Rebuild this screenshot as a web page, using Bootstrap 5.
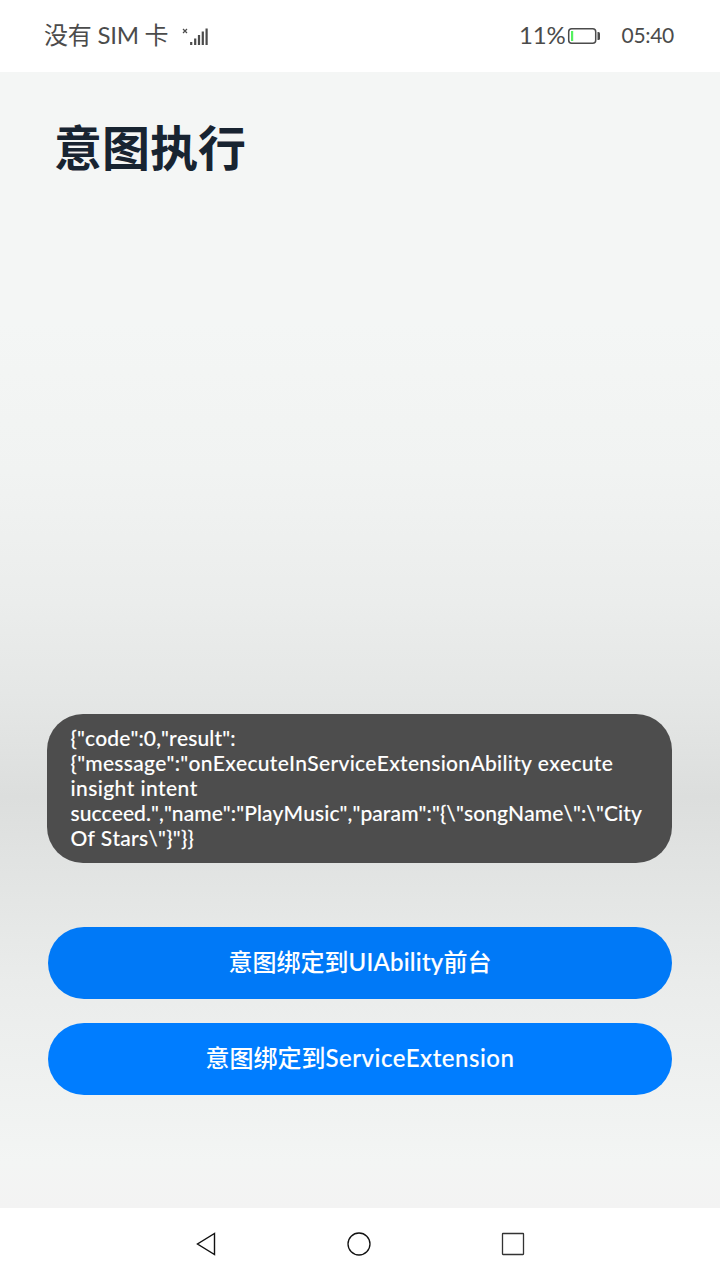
<!DOCTYPE html>
<html lang="zh-CN">
<head>
<meta charset="utf-8">
<meta name="viewport" content="width=device-width, initial-scale=1">
<title>意图执行</title>
<link href="https://cdn.jsdelivr.net/npm/bootstrap@5.3.0/dist/css/bootstrap.min.css" rel="stylesheet">
<style>
body{font-family:Lato,"Noto Sans CJK SC",sans-serif;background:#fff;overflow:hidden}
.status-bar{height:72px;color:#4b4b4b;padding:0 46px 2px 44px;font-size:24px;line-height:36px}
.status-bar svg{position:relative;top:1px}
.sim-text{letter-spacing:-.25px}
.signal-icon{margin-left:14px}
.pct-text{letter-spacing:-.2px;margin-right:1px}
.clock-text{font-size:21px;margin-left:21px;letter-spacing:-.3px}
.page-main{padding:0 48px 113px;background:linear-gradient(#f4f6f5 0,#f4f6f5 250px,#f1f3f2 400px,#ebedec 530px,#e5e7e6 620px,#e0e2e1 680px,#dcdedd 725px,#e0e2e1 775px,#e4e6e5 830px,#eaeceb 910px,#eff1f0 1010px,#f3f5f4 1090px,#f3f3f3 1136px)}
.page-title{font-size:48px;line-height:72px;font-weight:700;color:#182431;margin:40px 0 0 6px}
.result-toast{width:625px;height:149px;margin:0 0 64px -1px;border-radius:36px;background:#4d4d4d;color:#fff;padding:11px 24px 0 23.5px;font-size:21px;line-height:25px;font-weight:500;white-space:nowrap;font-kerning:none;font-variant-ligatures:none;-webkit-text-stroke:.1px #fff}
.btn-intent{height:72px;border-radius:36px;background:#007dff;color:#fff;font-size:24px;font-weight:500;line-height:36px;padding:0 0 2px}
.btn-first{background:#0079f7}
.nav-keys{height:72px;padding:0 195px 0 196px}
.t1{letter-spacing:.12px}.t2{letter-spacing:.28px}.t3{letter-spacing:.4px}.t4{letter-spacing:.07px}.t5{letter-spacing:.23px}
.b1,.b2{-webkit-text-stroke:.15px #fff}
.b1{letter-spacing:.25px}.b2{letter-spacing:.53px}
</style>
</head>
<body>
<div class="d-flex flex-column vh-100">
  <header class="status-bar d-flex align-items-center justify-content-between">
    <div class="d-flex align-items-center">
      <span class="sim-text">没有 SIM 卡</span>
      <svg class="signal-icon" width="28" height="20" viewBox="182 26 28 20"><path d="M183 29l4 4M187 29l-4 4" stroke="#4b4b4b" stroke-width="1.200"/><path d="M191.200 42v3M195.200 38.500v6.500M199 35v10M202.800 31.500v13.500M206.600 28.500v16.500" stroke="#4b4b4b" stroke-width="2.200"/></svg>
    </div>
    <div class="d-flex align-items-center">
      <span class="pct-text">11%</span>
      <svg width="34" height="18" viewBox="566 27 34 18"><rect x="567.700" y="28.700" width="27" height="14.600" rx="3" fill="none" stroke="#4b4b4b" stroke-width="1.500"/><rect x="570" y="31" width="2.200" height="10" fill="#54f05f"/><path d="M596.500 32h1q1.500 0 1.500 1.500v5q0 1.500-1.500 1.500h-1z" fill="#4b4b4b"/></svg>
      <span class="clock-text">05:40</span>
    </div>
  </header>
  <main class="page-main flex-grow-1 d-flex flex-column">
    <h1 class="page-title">意图执行</h1>
    <div class="result-toast mt-auto">
      <span class="t1">{"code":0,"result":</span><br>
      <span class="t2">{"message":"onExecuteInServiceExtensionAbility execute</span><br>
      <span class="t3">insight intent</span><br>
      <span class="t4">succeed.","name":"PlayMusic","param":"{\"songName\":\"City</span><br>
      <span class="t5">Of Stars\"}"}}</span>
    </div>
    <div class="d-grid gap-4">
      <button class="btn btn-intent btn-first" type="button">意图绑定到<span class="b1">UIAbility</span>前台</button>
      <button class="btn btn-intent" type="button">意图绑定到<span class="b2">ServiceExtension</span></button>
    </div>
  </main>
  <footer class="nav-keys d-flex align-items-center justify-content-between">
    <svg width="20" height="24" viewBox="196 1232 20 24"><path d="M214.500 1233.500v21L197.500 1244z" fill="none" stroke="#111" stroke-width="1.400"/></svg>
    <svg width="24" height="24" viewBox="347 1232 24 24"><circle cx="359" cy="1244" r="11" fill="none" stroke="#111" stroke-width="1.300"/></svg>
    <svg width="24" height="24" viewBox="501 1232 24 24"><rect x="502.500" y="1233.500" width="21" height="21" rx=".5" fill="none" stroke="#333" stroke-width="1.300"/></svg>
  </footer>
</div>
<script src="https://cdn.jsdelivr.net/npm/bootstrap@5.3.0/dist/js/bootstrap.bundle.min.js"></script>
</body>
</html>
